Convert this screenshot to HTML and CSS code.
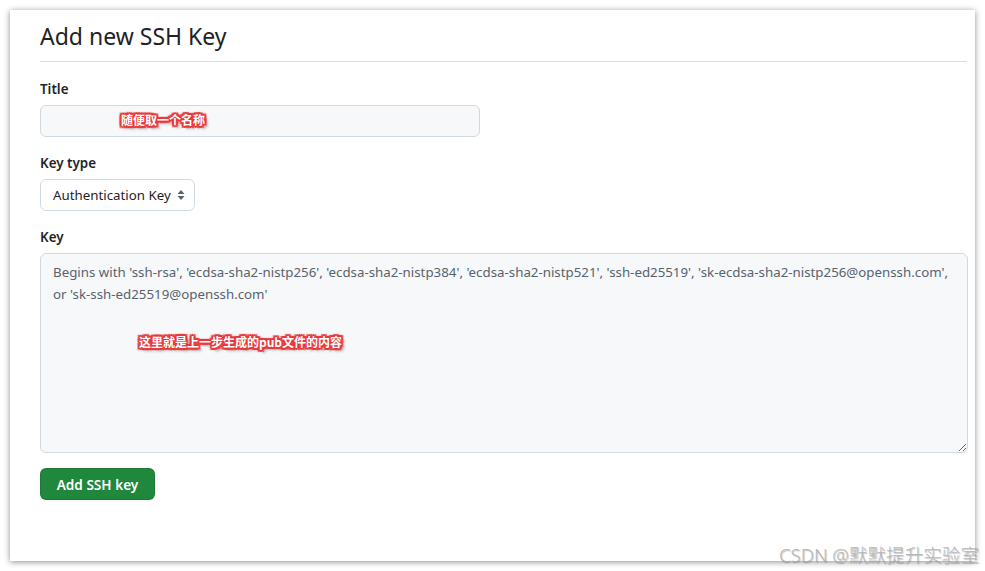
FILE: index.html
```html
<!DOCTYPE html>
<html lang="zh-CN">
<head>
    <meta charset="UTF-8">
    <title>Add new SSH Key</title>
    <link rel="stylesheet" href="styles.css">
</head>
<body>

<div class="card">
    <h1 class="title">Add new SSH Key</h1>

    <form class="form">
        <div class="field">
            <label for="keyTitle">Title</label>
            <div class="wrap">
                <input type="text" id="keyTitle" class="control input-title">
                <span class="note note-title">随便取一个名称</span>
            </div>
        </div>

        <div class="field">
            <label for="keyType">Key type</label>
            <div class="select">
                <span>Authentication Key</span>
                <svg width="8" height="12" viewBox="0 0 8 12"><path d="M4 1 L7.5 5 H0.5 Z M4 11 L7.5 7 H0.5 Z" fill="#59636e"/></svg>
            </div>
        </div>

        <div class="field">
            <label for="keyBody">Key</label>
            <div class="wrap">
                <textarea id="keyBody" class="control key-area" placeholder="Begins with 'ssh-rsa', 'ecdsa-sha2-nistp256', 'ecdsa-sha2-nistp384', 'ecdsa-sha2-nistp521', 'ssh-ed25519', 'sk-ecdsa-sha2-nistp256@openssh.com', or 'sk-ssh-ed25519@openssh.com'"></textarea>
                <span class="note note-key">这里就是上一步生成的pub文件的内容</span>
            </div>
        </div>

        <button type="button" class="btn-add">Add SSH key</button>
    </form>
</div>

<div class="watermark">CSDN @默默提升实验室</div>

</body>
</html>
```

FILE: styles.css
```css
body {
    font-family: 'Noto Sans', 'Noto Sans CJK SC', sans-serif;
    margin: 0;
    padding: 10px;
    background-color: #ffffff;
    color: #1f2328;
    height: 571px;
    box-sizing: border-box;
    overflow: hidden;
}
.card {
    background: #ffffff;
    width: 965px;
    height: 551px;
    box-sizing: border-box;
    padding: 8px 8px 0 30px;
    box-shadow: 0 1px 6px rgba(0, 0, 0, 0.45);
}
.title {
    margin: 0;
    padding-bottom: 7px;
    font-size: 23px;
    font-weight: 400;
    line-height: 36px;
    border-bottom: 1px solid #d8dee4;
}
.form {
    padding-top: 17px;
}
.field {
    margin-bottom: 16px;
}
label {
    display: block;
    font-size: 13.4px;
    font-weight: 600;
    line-height: 20px;
    margin-bottom: 6px;
}
.wrap {
    position: relative;
}
.control {
    display: block;
    box-sizing: border-box;
    border: 1px solid #d1d9e0;
    border-radius: 6px;
    background: #f6f8fa;
    font-family: inherit;
    font-size: 13.3px;
    color: #1f2328;
}
.input-title {
    width: 440px;
    height: 32px;
    padding: 5px 12px;
}
.select {
    width: 155px;
    height: 32px;
    box-sizing: border-box;
    display: flex;
    align-items: center;
    justify-content: space-between;
    padding: 0 9px 0 12px;
    border: 1px solid #d1d9e0;
    border-radius: 6px;
    background: #ffffff;
    font-size: 13.3px;
}
.key-area {
    width: 928px;
    height: 200px;
    padding: 7px 12px;
    line-height: 22px;
    resize: vertical;
}
.key-area::placeholder {
    color: #59636e;
    opacity: 1;
}
.note {
    position: absolute;
    font-family: 'Noto Sans CJK SC', sans-serif;
    font-size: 12px;
    font-weight: 700;
    color: #ffffff;
    line-height: 14px;
    text-shadow: 1px 0 0 #e8393c, -1px 0 0 #e8393c, 0 1px 0 #e8393c, 0 -1px 0 #e8393c,
        1px 1px 0 #e8393c, -1px -1px 0 #e8393c, 1px -1px 0 #e8393c, -1px 1px 0 #e8393c,
        2px 0 0 #e8393c, -2px 0 0 #e8393c, 0 2px 0 #e8393c, 0 -2px 0 #e8393c,
        2px 2px 1px #e8393c, -2px -2px 1px #e8393c, 2px -2px 1px #e8393c, -2px 2px 1px #e8393c,
        3px 3px 3px rgba(0, 0, 0, 0.4);
    white-space: nowrap;
}
.note-title {
    left: 81px;
    top: 8px;
}
.note-key {
    left: 99px;
    top: 82px;
}
.btn-add {
    display: block;
    width: 115px;
    height: 32px;
    border: 1px solid rgba(31, 35, 40, 0.15);
    border-radius: 6px;
    background-color: #1f883d;
    color: #ffffff;
    font-family: inherit;
    font-size: 13.6px;
    font-weight: 600;
    margin-top: -1px;
}
.watermark {
    position: absolute;
    left: 779px;
    top: 540px;
    font-family: 'Noto Sans', 'Noto Sans CJK SC', sans-serif;
    font-size: 18.6px;
    font-weight: 300;
    color: rgba(175, 175, 175, 0.9);
    text-shadow: 1px 1px 1px rgba(0, 0, 0, 0.25);
    white-space: nowrap;
}
```
